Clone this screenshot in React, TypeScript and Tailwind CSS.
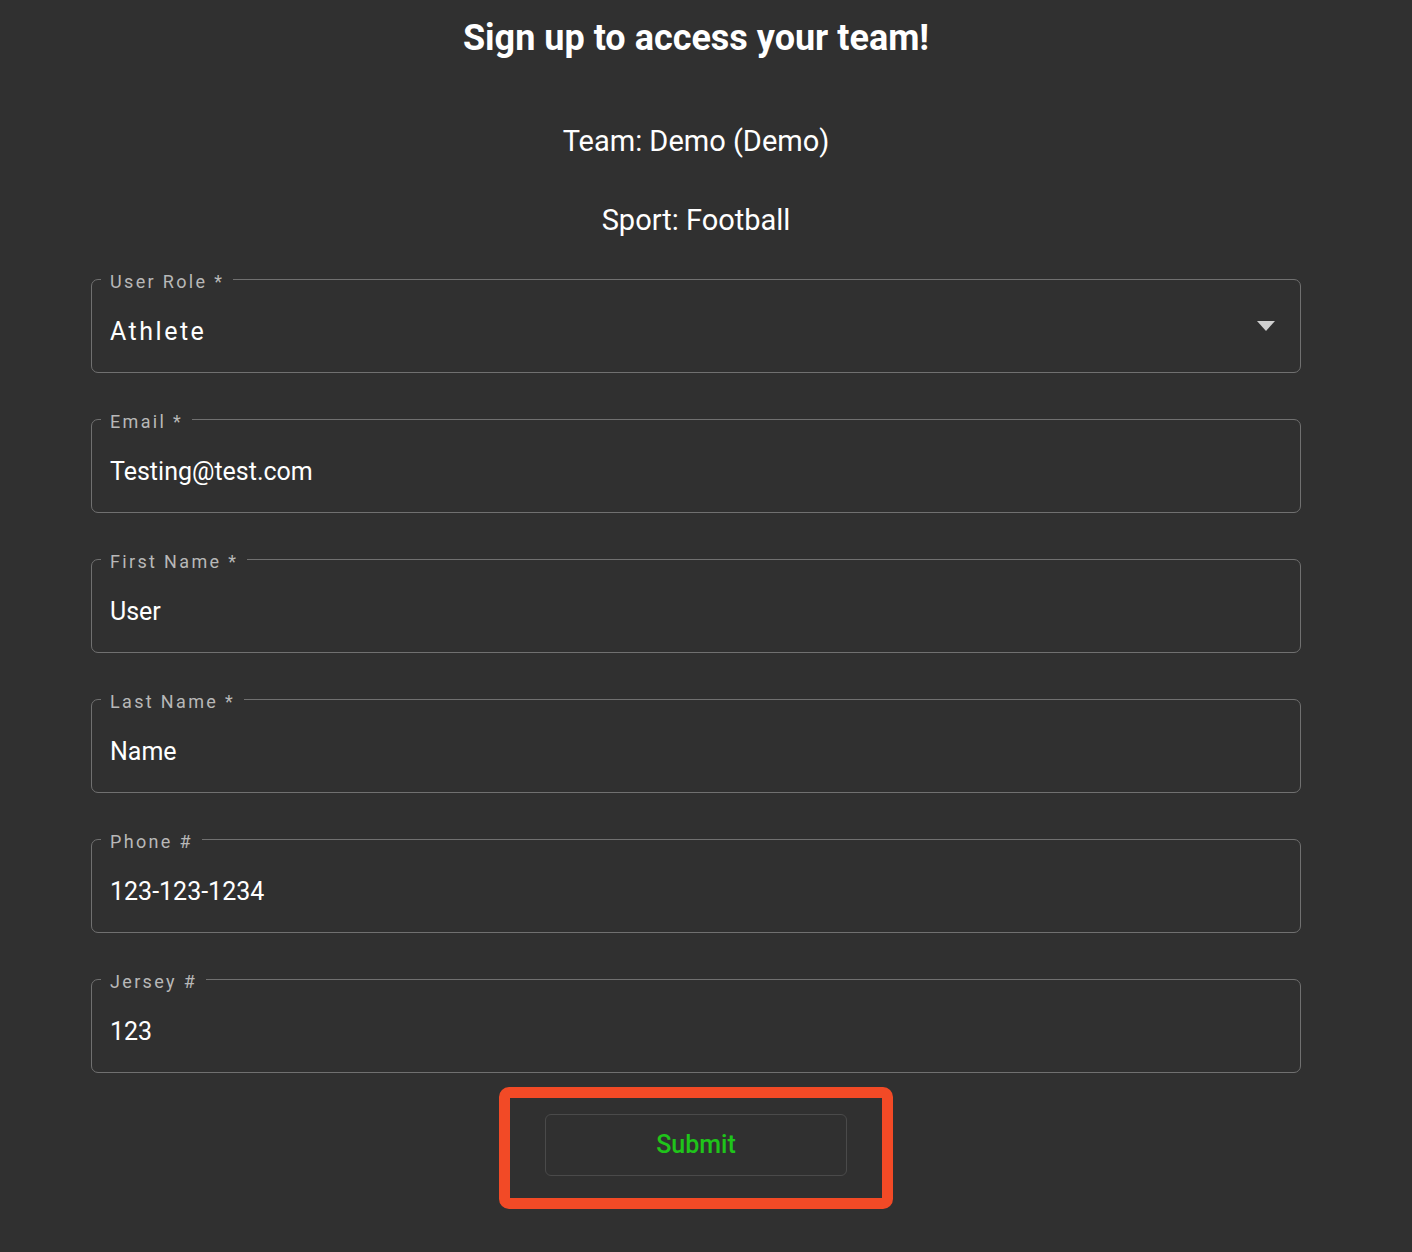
import React from "react";

type Field = {
  label: string;
  value: string;
  select?: boolean;
};

const fields: Field[] = [
  { label: "User Role *", value: "Athlete", select: true },
  { label: "Email *", value: "Testing@test.com" },
  { label: "First Name *", value: "User" },
  { label: "Last Name *", value: "Name" },
  { label: "Phone #", value: "123-123-1234" },
  { label: "Jersey #", value: "123" },
];

function OutlinedField({ label, value, select }: Field) {
  return (
    <fieldset className="w-[1210px] rounded-[7px] border border-[#707070] px-[18px] pb-[24px] pt-0">
      <legend className="ml-[-9px] px-[9px] text-[18px] leading-[20px] tracking-[0.13em] text-[#b8b8b8]">
        <span className="relative top-[3px]">{label}</span>
      </legend>
      <div className="mt-[27px] flex h-[32px] items-center justify-between">
        <span
          className={
            select
              ? "text-[25px] leading-[32px] tracking-[0.1em] text-white"
              : "text-[25px] leading-[32px] text-white"
          }
        >
          {value}
        </span>
        {select && (
          <svg width="18" height="10" viewBox="0 0 18 10" className="mr-[7px] mb-[13px]">
            <path d="M0 0 L18 0 L9 10 Z" fill="#cfcfcf" />
          </svg>
        )}
      </div>
    </fieldset>
  );
}

export default function App() {
  return (
    <div
      className="min-h-[1252px] w-full bg-[#303030]"
      style={{ fontFamily: "Roboto, 'Liberation Sans', sans-serif" }}
    >
      <div className="flex w-[1392px] flex-col items-center pt-[18px]">
        <h1 className="text-[36px] font-bold leading-[40px] text-white">
          Sign up to access your team!
        </h1>
        <p className="mt-[65px] text-[29px] leading-[36px] text-white">
          Team: Demo (Demo)
        </p>
        <p className="mt-[43px] text-[29px] leading-[36px] text-white">
          Sport: Football
        </p>

        <div className="mt-[31px] flex flex-col gap-[36px]">
          {fields.map((f) => (
            <OutlinedField key={f.label} {...f} />
          ))}
        </div>

        <div className="mt-[14px] rounded-[10px] border-[11px] border-[#f24a26] px-[35px] pt-[16px] pb-[22px]">
          <button className="flex h-[62px] w-[302px] items-center justify-center rounded-[6px] border border-[#4a4a4a] text-[25px] font-medium text-[#1fc41a]">
            Submit
          </button>
        </div>
      </div>
    </div>
  );
}
